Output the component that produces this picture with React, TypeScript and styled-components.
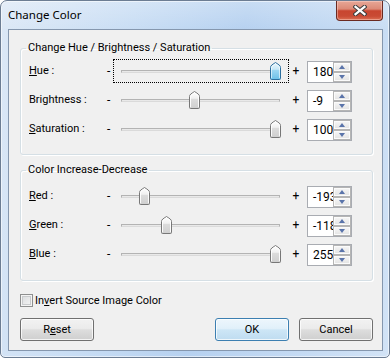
import React, { useId } from 'react';
import styled, { createGlobalStyle } from 'styled-components';

const GlobalStyle = createGlobalStyle`
  html, body {
    margin: 0;
    padding: 0;
    background: #ffffff;
  }
  body {
    font-family: Roboto, "Noto Sans", sans-serif;
    font-size: 11px;
    color: #000;
  }
`;

const Window = styled.div`
  box-sizing: border-box;
  width: 390px;
  height: 358px;
  display: flex;
  flex-direction: column;
  padding: 0 6px 6px 7px;
  border: 1px solid #6c7d93;
  border-radius: 7px 7px 5px 5px;
  background:
    linear-gradient(to bottom, rgba(255, 255, 255, 0.25), rgba(255, 255, 255, 0) 30px),
    linear-gradient(100deg, #dce8f6 0%, #c8ddf4 30%, #b6d1f0 55%, #c4daf3 80%, #d2e3f6 100%);
  box-shadow: inset 0 0 0 1px rgba(255, 255, 255, 0.55);
`;

const TitleBar = styled.div`
  height: 28px;
  flex: none;
  display: flex;
  align-items: flex-start;
  justify-content: space-between;
`;

const Title = styled.div`
  padding-top: 6px;
  line-height: 16px;
  font-family: "Noto Sans", sans-serif;
  font-size: 11.5px;
  color: #000;
`;

const CloseButton = styled.div`
  box-sizing: border-box;
  width: 47px;
  height: 20px;
  display: flex;
  align-items: center;
  justify-content: center;
  border: 1px solid #6a2a22;
  border-top: none;
  border-radius: 0 0 4px 4px;
  background: linear-gradient(to bottom, #e7a797 0%, #dc8a77 42%, #c8452f 52%, #c94b34 80%, #dc6e52 100%);
  box-shadow: inset 0 0 0 1px rgba(255, 220, 210, 0.45);
`;

const Client = styled.div`
  flex: 1;
  box-sizing: border-box;
  display: flex;
  flex-direction: column;
  padding: 10px 9px 0 11px;
  border: 1px solid #8597ae;
  background: #f0f0f0;
`;

const Group = styled.fieldset<{ $top: number; $bottom: number; $gap: number }>`
  margin: ${(p) => p.$gap}px 0 0 0;
  padding: ${(p) => p.$top}px 19px ${(p) => p.$bottom}px 8px;
  border: 1px solid #d5dfe5;
  border-radius: 3px;
  box-shadow: inset 1px 1px 0 #ffffff, 1px 1px 0 #ffffff;
  min-width: 0;
`;

const Legend = styled.legend`
  padding: 0 2px;
  margin-left: -3px;
  line-height: 16px;
  color: #000;
`;

const Row = styled.div`
  display: grid;
  grid-template-columns: 78px 6px 176px 14px 45px;
  align-items: center;
  height: 29px;
`;

const Label = styled.div`
  white-space: nowrap;
  line-height: 16px;
`;

const Sign = styled.div<{ $center?: boolean }>`
  text-align: ${(p) => (p.$center ? 'center' : 'left')};
  line-height: 16px;
  font-size: 12px;
`;

const SliderBox = styled.div<{ $focused?: boolean }>`
  position: relative;
  box-sizing: border-box;
  height: 24px;
  border: 1px dotted ${(p) => (p.$focused ? '#000' : 'transparent')};
`;

const Track = styled.div`
  box-sizing: border-box;
  height: 3px;
  margin: 10px 8px 0 7px;
  border: 1px solid #b3b3b3;
  border-bottom-color: #dadada;
  background: #e9e9e9;
`;

const ThumbWrap = styled.div`
  position: absolute;
  top: 2px;
  width: 11px;
  height: 18px;
  line-height: 0;
`;

const SpinBox = styled.div`
  box-sizing: border-box;
  width: 45px;
  height: 22px;
  margin-left: 4px;
  margin-top: 3px;
  display: flex;
  border: 1px solid #a9acb2;
  background: #fff;
`;

const SpinText = styled.div`
  flex: 1;
  min-width: 0;
  overflow: hidden;
  white-space: nowrap;
  padding-left: 5px;
  line-height: 20px;
  font-size: 12px;
`;

const SpinButtons = styled.div`
  width: 18px;
  display: flex;
  flex-direction: column;
`;

const SpinButton = styled.div<{ $down?: boolean }>`
  flex: 1;
  box-sizing: border-box;
  display: flex;
  align-items: center;
  justify-content: center;
  border: 1px solid #b5b5b5;
  background: linear-gradient(to bottom, #f7f7f7, #e3e3e3);
  box-shadow: inset 0 0 0 1px #fbfbfb;

  &::after {
    content: '';
    width: 0;
    height: 0;
    border-left: 3.5px solid transparent;
    border-right: 3.5px solid transparent;
    ${(p) => (p.$down ? 'border-top' : 'border-bottom')}: 4px solid #5a74aa;
  }
`;

const CheckRow = styled.div`
  display: flex;
  align-items: center;
  gap: 2px;
  height: 16px;
  margin-top: 11px;
`;

const CheckBox = styled.div`
  box-sizing: border-box;
  width: 13px;
  height: 13px;
  border: 1px solid #8e8f8f;
  background: linear-gradient(135deg, #d8dadc, #f6f6f6);
  box-shadow: inset 0 0 0 1px #f4f4f4, inset 0 0 0 2px #c9cbcd;
`;

const ButtonRow = styled.div`
  display: flex;
  gap: 10px;
  margin-top: 10px;
`;

const Spacer = styled.div`
  flex: 1;
`;

const Button = styled.button<{ $primary?: boolean }>`
  box-sizing: border-box;
  width: 74px;
  height: 23px;
  padding: 0;
  font: inherit;
  color: #000;
  border: 1px solid ${(p) => (p.$primary ? '#3c7fb1' : '#707070')};
  border-radius: 3px;
  background: ${(p) =>
    p.$primary
      ? 'linear-gradient(to bottom, #edf6fc 0%, #e1f0fa 45%, #cde6f6 52%, #bfdcf0 100%)'
      : 'linear-gradient(to bottom, #f2f2f2 0%, #ebebeb 45%, #dddddd 52%, #cfcfcf 100%)'};
  box-shadow: inset 0 0 0 1px rgba(255, 255, 255, 0.75);
`;

type SliderRow = {
  label: string;
  key?: number;
  value: number;
  min: number;
  max: number;
  focused?: boolean;
};

const hsbRows: SliderRow[] = [
  { label: 'Hue', key: 0, value: 180, min: -180, max: 180, focused: true },
  { label: 'Brightness', value: -9, min: -100, max: 100 },
  { label: 'Saturation', key: 0, value: 100, min: -100, max: 100 },
];

const rgbRows: SliderRow[] = [
  { label: 'Red', key: 0, value: -193, min: -255, max: 255 },
  { label: 'Green', key: 0, value: -118, min: -255, max: 255 },
  { label: 'Blue', key: 0, value: 255, min: -255, max: 255 },
];

const Mnemonic: React.FC<{ text: string; at?: number }> = ({ text, at }) => {
  if (at === undefined) return <>{text}</>;
  return (
    <>
      {text.slice(0, at)}
      <u>{text[at]}</u>
      {text.slice(at + 1)}
    </>
  );
};

const Thumb: React.FC<{ active?: boolean }> = ({ active }) => {
  const id = useId().replace(/:/g, '');
  const stops = active
    ? ['#e8f6fd', '#c9e9f8', '#9bd6f2', '#6cc0e8']
    : ['#ffffff', '#f1f1f1', '#dcdcdc', '#cfcfcf'];
  return (
    <svg width="11" height="18" viewBox="0 0 11 18">
      <defs>
        <linearGradient id={id} x1="0" y1="0" x2="0" y2="1">
          <stop offset="0%" stopColor={stops[0]} />
          <stop offset="40%" stopColor={stops[1]} />
          <stop offset="46%" stopColor={stops[2]} />
          <stop offset="100%" stopColor={stops[3]} />
        </linearGradient>
      </defs>
      <path
        d="M0.5 16.5 V5.5 Q0.5 4.2 1.8 3 L5.5 0.5 L9.2 3 Q10.5 4.2 10.5 5.5 V16.5 Q10.5 17.5 9.5 17.5 H1.5 Q0.5 17.5 0.5 16.5 Z"
        fill={`url(#${id})`}
        stroke={active ? '#2d6f9e' : '#777777'}
      />
      <path
        d="M1.5 16 V5.8 Q1.5 4.8 2.4 4 L5.5 1.7 L8.6 4 Q9.5 4.8 9.5 5.8 V16"
        fill="none"
        stroke={active ? 'rgba(255,255,255,0.6)' : 'rgba(255,255,255,0.9)'}
      />
    </svg>
  );
};

const Slider: React.FC<{ row: SliderRow }> = ({ row }) => {
  const frac = (row.value - row.min) / (row.max - row.min);
  return (
    <SliderBox $focused={row.focused}>
      <Track />
      <ThumbWrap style={{ left: 7 + Math.round(frac * 149) }}>
        <Thumb active={row.focused} />
      </ThumbWrap>
    </SliderBox>
  );
};

const Spin: React.FC<{ value: number }> = ({ value }) => (
  <SpinBox>
    <SpinText>{value}</SpinText>
    <SpinButtons>
      <SpinButton />
      <SpinButton $down />
    </SpinButtons>
  </SpinBox>
);

const SliderLine: React.FC<{ row: SliderRow }> = ({ row }) => (
  <Row>
    <Label>
      <Mnemonic text={row.label} at={row.key} /> :
    </Label>
    <Sign>-</Sign>
    <Slider row={row} />
    <Sign $center>+</Sign>
    <Spin value={row.value} />
  </Row>
);

const CloseGlyph = () => (
  <svg width="14" height="11" viewBox="0 0 14 11">
    <path d="M2.5 1.8 L11.5 9.2 M11.5 1.8 L2.5 9.2" stroke="#3d3d3d" strokeWidth="4.2" strokeLinecap="square" />
    <path d="M2.5 1.8 L11.5 9.2 M11.5 1.8 L2.5 9.2" stroke="#ffffff" strokeWidth="2.2" strokeLinecap="square" />
  </svg>
);

const App: React.FC = () => (
  <>
    <GlobalStyle />
    <Window>
      <TitleBar>
        <Title>Change Color</Title>
        <CloseButton>
          <CloseGlyph />
        </CloseButton>
      </TitleBar>
      <Client>
        <Group $gap={0} $top={0} $bottom={11}>
          <Legend>Change Hue / Brightness / Saturation</Legend>
          {hsbRows.map((row) => (
            <SliderLine key={row.label} row={row} />
          ))}
        </Group>
        <Group $gap={7} $top={3} $bottom={12}>
          <Legend>Color Increase-Decrease</Legend>
          {rgbRows.map((row) => (
            <SliderLine key={row.label} row={row} />
          ))}
        </Group>
        <CheckRow>
          <CheckBox />
          <span>
            In<u>v</u>ert Source Image Color
          </span>
        </CheckRow>
        <ButtonRow>
          <Button>
            R<u>e</u>set
          </Button>
          <Spacer />
          <Button $primary>OK</Button>
          <Button>Cancel</Button>
        </ButtonRow>
      </Client>
    </Window>
  </>
);

export default App;
